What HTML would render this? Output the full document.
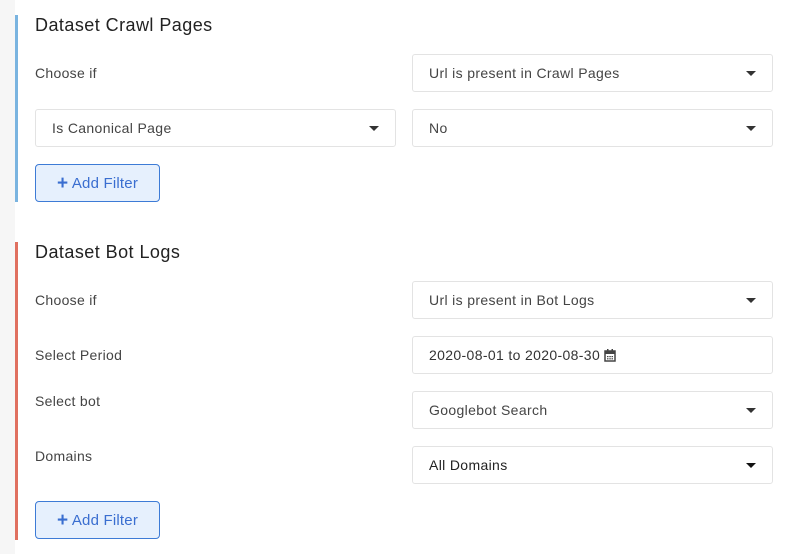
<!DOCTYPE html>
<html><head><style>
body{margin:0;width:803px;height:554px;background:#fff;font-family:"Liberation Sans",sans-serif;position:relative;overflow:hidden;color:#333}
.strip{position:absolute;left:0;top:0;width:15px;height:554px;background:#f6f6f6}
.bar{position:absolute;left:15px;width:3px}
.t{position:absolute;left:35px;font-size:18px;color:#222;letter-spacing:0.45px}
.l{position:absolute;left:35px;font-size:14px;color:#444;letter-spacing:0.3px}
.box{position:absolute;border:1px solid #e3e3e3;border-radius:3px;box-sizing:border-box;height:38px;font-size:14px;color:#444;padding-left:16px;line-height:36px;letter-spacing:0.35px}
.box .c{position:absolute;right:16px;top:16px;width:0;height:0;border-left:5px solid transparent;border-right:5px solid transparent;border-top:5px solid #333}
.btn{position:absolute;left:35px;width:125px;height:38px;box-sizing:border-box;border:1px solid #3d7bd6;border-radius:4px;background:#e6f0fd;color:#3a6ed0;font-size:15px;text-align:center;line-height:37px;letter-spacing:0.2px}
.btn b{font-size:19px;font-weight:bold;vertical-align:-1px}
</style></head><body>
<div class="strip"></div>
<div class="bar" style="top:15px;height:187px;background:#7ab4e0"></div>
<div class="t" style="top:15px">Dataset Crawl Pages</div>
<div class="l" style="top:65px">Choose if</div>
<div class="box" style="left:412px;top:54px;width:361px">Url is present in Crawl Pages<span class="c"></span></div>
<div class="box" style="left:35px;top:109px;width:361px">Is Canonical Page<span class="c"></span></div>
<div class="box" style="left:412px;top:109px;width:361px">No<span class="c"></span></div>
<div class="btn" style="top:164px"><b>+</b> Add Filter</div>

<div class="bar" style="top:242px;height:298px;background:#e07060"></div>
<div class="t" style="top:242px">Dataset Bot Logs</div>
<div class="l" style="top:292px">Choose if</div>
<div class="box" style="left:412px;top:281px;width:361px">Url is present in Bot Logs<span class="c"></span></div>
<div class="l" style="top:347px">Select Period</div>
<div class="box" style="left:412px;top:336px;width:361px;color:#333">2020-08-01 to 2020-08-30 <svg width="12" height="13" viewBox="0 0 12 13" style="vertical-align:-2px"><rect x="1" y="2" width="10" height="10" fill="none" stroke="#444" stroke-width="1.5"/><rect x="1" y="2" width="10" height="3" fill="#444"/><rect x="3" y="0" width="1.5" height="3" fill="#444"/><rect x="7.5" y="0" width="1.5" height="3" fill="#444"/><g fill="#444"><rect x="3" y="7" width="1.5" height="1.2"/><rect x="5.3" y="7" width="1.5" height="1.2"/><rect x="7.5" y="7" width="1.5" height="1.2"/><rect x="3" y="9.2" width="1.5" height="1.2"/><rect x="5.3" y="9.2" width="1.5" height="1.2"/><rect x="7.5" y="9.2" width="1.5" height="1.2"/></g></svg></div>
<div class="l" style="top:393px">Select bot</div>
<div class="box" style="left:412px;top:391px;width:361px">Googlebot Search<span class="c"></span></div>
<div class="l" style="top:448px">Domains</div>
<div class="box" style="left:412px;top:446px;width:361px;color:#222">All Domains<span class="c" style="border-top-color:#111"></span></div>
<div class="btn" style="top:501px"><b>+</b> Add Filter</div>
</body></html>
